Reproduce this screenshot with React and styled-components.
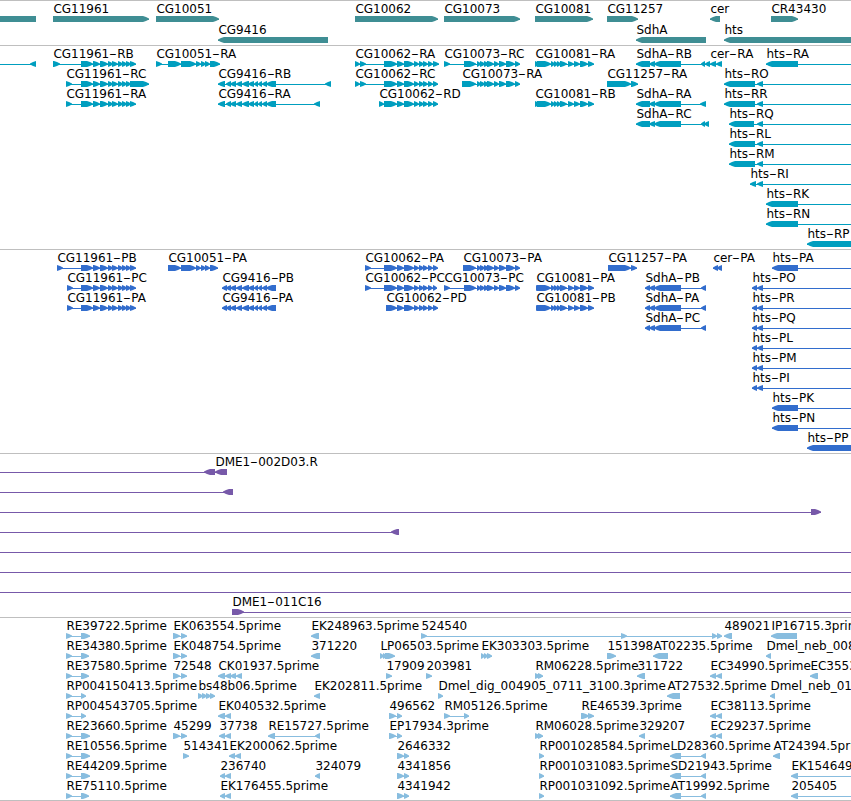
import React from "react";
import styled, { createGlobalStyle } from "styled-components";

const GlobalStyle = createGlobalStyle`
    body {
        margin: 0;
        background: #ffffff;
        overflow: hidden;
    }
`;

// Styled Components
const Browser = styled.main`
    display: flex;
    flex-direction: column;
    width: 851px;
    height: 801px;
    box-sizing: border-box;
    overflow: hidden;
    background: #ffffff;
    border-bottom: 1px solid #bfbfbf;
`;

const TrackPanel = styled.section`
    flex: none;
    box-sizing: border-box;
    height: ${(props) => props.$height}px;
    border-top: 1px solid #bfbfbf;
    color: ${(props) => props.$color};
`;

const Lane = styled.div`
    position: relative;
    height: ${(props) => props.$height}px;
`;

const FeatureBox = styled.div`
    position: absolute;
    top: 0;
`;

const Label = styled.span`
    display: block;
    height: 15px;
    margin-left: 0.4px;
    line-height: 17px;
    font-family: "DejaVu Sans", sans-serif;
    font-size: 12px;
    color: #000000;
    white-space: nowrap;
`;

// hyphen drawn as wide as a digit
const Dash = styled.span`
    display: inline-block;
    width: 8px;
    text-align: center;
    transform: scaleX(1.8);
`;

const Glyph = styled.svg`
    display: block;
    height: 6px;
    overflow: visible;
    fill: currentColor;
`;

const LEFT = -12;
const RIGHT = 863;

// strand is the arrow direction, from/to stretch the intron line past the exons
const f = (label, strand, exons, span = {}) => ({ label, strand, exons, ...span });
const toRight = { to: RIGHT };

const cg11961 = [[81, 93], [93, 100], [100, 108], [108, 113], [112, 118], [118, 123], [122, 127], [126, 131]];
const cg9416 = [[226, 231], [230, 236], [236, 242], [242, 249], [248, 254], [254, 258], [258, 262], [262, 267], [266, 276]];
const cg10062 = [[397, 404], [404, 414], [414, 419], [419, 424], [423, 428], [428, 433]];
const cg10073 = [[477, 481], [480, 485], [484, 489], [487, 494], [494, 499], [499, 506], [506, 515], [515, 520]];
const cg10081 = [[551, 555], [554, 558], [557, 561], [560, 567], [568, 574], [574, 580], [580, 588], [588, 594]];
const cg10051 = [[168, 181], [181, 196], [196, 201], [201, 206], [205, 210]];
const sdhR = [[636, 650], [649, 655], [654, 681]];
const sdhP = [[645, 650], [649, 655], [654, 681], [701, 706]];
const htsP = [[752, 757], [757, 763]];
const ek = [[173, 180], [181, 187]];
const ec = [[710, 716], [716, 722]];

const tracks = [
    {
        name: "genes",
        color: "#3f8e94",
        height: 45,
        laneHeight: 21,
        lanes: [
            [
                f("", "-", [[LEFT, 36]]),
                f("CG11961", "+", [[53, 149]]),
                f("CG10051", "+", [[156, 219]]),
                f("CG10062", "+", [[355, 438]]),
                f("CG10073", "+", [[444, 520]]),
                f("CG10081", "+", [[535, 593]]),
                f("CG11257", "+", [[607, 638]]),
                f("cer", "-", [[710, 720]]),
                f("CR43430", "+", [[771, 798]]),
            ],
            [
                f("CG9416", "-", [[218, 328]]),
                f("SdhA", "-", [[636, 706]]),
                f("hts", "-", [[724, RIGHT]]),
            ],
        ],
    },
    {
        name: "transcripts",
        color: "#009ebf",
        height: 204,
        laneHeight: 20,
        lanes: [
            [
                f("", "-", [[30, 36]], { from: LEFT }),
                f("CG11961-RB", "+", [[53, 60], ...cg11961, [130, 136]]),
                f("CG10051-RA", "+", [[156, 162], ...cg10051, [210, 220]]),
                f("CG10062-RA", "+", [[355, 360], [360, 366], [384, 397], ...cg10062, [433, 439]]),
                f("CG10073-RC", "+", [[444, 450], [464, 476], ...cg10073]),
                f("CG10081-RA", "+", [[535, 540], [537, 551], ...cg10081]),
                f("SdhA-RB", "-", [...sdhR, [701, 705], [705, 710]]),
                f("cer-RA", "-", [[710, 716], [716, 722]]),
                f("hts-RA", "-", [[766, 798]], toRight),
            ],
            [
                f("CG11961-RC", "+", [[66, 72], ...cg11961, [130, 149]]),
                f("CG9416-RB", "-", [[218, 225], ...cg9416, [325, 331]]),
                f("CG10062-RC", "+", [[355, 360], [360, 366], [384, 397], ...cg10062, [433, 438]]),
                f("CG10073-RA", "+", [[462, 476], ...cg10073]),
                f("CG11257-RA", "+", [[607, 631], [631, 638]]),
                f("hts-RO", "-", [[724, 755], [757, 763]], toRight),
            ],
            [
                f("CG11961-RA", "+", [[66, 72], ...cg11961, [130, 136]]),
                f("CG9416-RA", "-", [[218, 225], ...cg9416, [314, 320]]),
                f("CG10062-RD", "+", [[379, 384], [384, 397], ...cg10062, [433, 438]]),
                f("CG10081-RB", "+", [[535, 540], [537, 551], ...cg10081]),
                f("SdhA-RA", "-", [...sdhR, [700, 706]]),
                f("hts-RR", "-", [[724, 755], [757, 763]], toRight),
            ],
            [
                f("SdhA-RC", "-", [...sdhR, [701, 705], [704, 709]]),
                f("hts-RQ", "-", [[729, 754], [757, 763]], toRight),
            ],
            [f("hts-RL", "-", [[729, 755], [757, 763]], toRight)],
            [f("hts-RM", "-", [[729, 755], [757, 763]], toRight)],
            [f("hts-RI", "-", [[750, 756], [757, 763]], toRight)],
            [f("hts-RK", "-", [[766, 798]], toRight)],
            [f("hts-RN", "-", [[766, 798]], toRight)],
            [f("hts-RP", "-", [[807, RIGHT]])],
        ],
    },
    {
        name: "proteins",
        color: "#326dcd",
        height: 204,
        laneHeight: 20,
        lanes: [
            [
                f("CG11961-PB", "+", [[57, 63], ...cg11961, [130, 136]]),
                f("CG10051-PA", "+", [...cg10051, [210, 218]]),
                f("CG10062-PA", "+", [[365, 371], [384, 397], ...cg10062, [433, 438]]),
                f("CG10073-PA", "+", [[463, 476], ...cg10073]),
                f("CG11257-PA", "+", [[608, 631], [631, 637]]),
                f("cer-PA", "-", [[713, 718], [717, 722]]),
                f("hts-PA", "-", [[772, 798]], toRight),
            ],
            [
                f("CG11961-PC", "+", [[67, 73], ...cg11961, [130, 136]]),
                f("CG9416-PB", "-", [[222, 227], ...cg9416]),
                f("CG10062-PC", "+", [[365, 371], [384, 397], ...cg10062, [433, 437]]),
                f("CG10073-PC", "+", [[444, 450], [464, 476], ...cg10073]),
                f("CG10081-PA", "+", [[536, 540], [537, 551], ...cg10081]),
                f("SdhA-PB", "-", sdhP),
                f("hts-PO", "-", htsP, toRight),
            ],
            [
                f("CG11961-PA", "+", [[67, 73], ...cg11961, [130, 136]]),
                f("CG9416-PA", "-", [[222, 227], ...cg9416]),
                f("CG10062-PD", "+", [[386, 397], ...cg10062, [433, 438]]),
                f("CG10081-PB", "+", [[536, 540], [537, 551], ...cg10081]),
                f("SdhA-PA", "-", sdhP),
                f("hts-PR", "-", htsP, toRight),
            ],
            [f("SdhA-PC", "-", sdhP), f("hts-PQ", "-", htsP, toRight)],
            [f("hts-PL", "-", htsP, toRight)],
            [f("hts-PM", "-", htsP, toRight)],
            [f("hts-PI", "-", htsP, toRight)],
            [f("hts-PK", "-", [[772, 798]], toRight)],
            [f("hts-PN", "-", [[772, 798]], toRight)],
            [f("hts-PP", "-", [[807, RIGHT]])],
        ],
    },
    {
        name: "clones",
        color: "#7759a9",
        height: 164,
        laneHeight: 20,
        lanes: [
            [
                f("", "-", [[204, 215]], { from: LEFT }),
                f("DME1-002D03.R", "-", [[215, 227]]),
            ],
            [f("", "-", [[223, 233]], { from: LEFT })],
            [f("", "+", [[811, 821]], { from: LEFT })],
            [f("", "-", [[391, 399]], { from: LEFT })],
            [f("", "+", [], { from: LEFT, to: RIGHT })],
            [f("", "+", [], { from: LEFT, to: RIGHT })],
            [f("", "+", [], { from: LEFT, to: RIGHT })],
            [f("DME1-011C16", "+", [[232, 244]], toRight)],
        ],
    },
    {
        name: "ests",
        color: "#88bddf",
        height: 183,
        laneHeight: 20,
        lanes: [
            [
                f("RE39722.5prime", "+", [[66, 72], [81, 90]]),
                f("EK063554.5prime", "+", ek),
                f("EK248963.5prime", "-", [[311, 319]]),
                f("524540", "+", [[421, 427], [621, 627], [712, 717], [717, 722]]),
                f("489021", "-", [[724, 732]]),
                f("IP16715.3prime", "-", [[771, 797]]),
            ],
            [
                f("RE34380.5prime", "+", [[66, 72], [81, 89]]),
                f("EK048754.5prime", "+", ek),
                f("371220", "-", [[311, 320]]),
                f("LP06503.5prime", "+", [[380, 384], [383, 387], [385, 395]]),
                f("EK303303.5prime", "+", [[481, 485], [484, 488], [487, 492]]),
                f("151398", "+", [[607, 616]]),
                f("AT02235.5prime", "-", [[653, 668]]),
                f("Dmel_neb_008", "-", [[766, 771]]),
            ],
            [
                f("RE37580.5prime", "+", [[66, 72], [81, 89]]),
                f("72548", "+", ek),
                f("CK01937.5prime", "-", [[218, 225], [225, 231], [230, 236], [236, 242]]),
                f("17909", "+", [[386, 392]]),
                f("203981", "+", [[426, 432]]),
                f("RM06228.5prime", "+", [[535, 540], [538, 543]]),
                f("311722", "-", [[637, 645]]),
                f("EC34990.5prime", "-", ec),
                f("EC3553", "-", [[810, 818]]),
            ],
            [
                f("RP004150413.5prime", "+", [[66, 72], [81, 86]]),
                f("bs48b06.5prime", "+", [[198, 203], [202, 207], [206, 211], [210, 215]]),
                f("EK202811.5prime", "-", [[314, 320]]),
                f("Dmel_dig_004905_0711_3100.3prime", "+", [[438, 443]]),
                f("AT27532.5prime", "-", [[667, 680]]),
                f("Dmel_neb_01", "-", [[770, 775]]),
            ],
            [
                f("RP004543705.5prime", "+", [[66, 72], [81, 86]]),
                f("EK040532.5prime", "-", [[218, 225], [225, 231]]),
                f("496562", "+", [[389, 396], [397, 402]]),
                f("RM05126.5prime", "+", [[444, 450], [464, 469]]),
                f("RE46539.3prime", "+", [[581, 589], [588, 594]]),
                f("EC38113.5prime", "-", ec),
            ],
            [
                f("RE23660.5prime", "+", [[66, 72], [81, 90]]),
                f("45299", "+", ek),
                f("37738", "-", [[219, 225], [225, 231]]),
                f("RE15727.5prime", "-", [[268, 275], [315, 320]]),
                f("EP17934.3prime", "+", [[389, 396], [397, 402]]),
                f("RM06028.5prime", "+", [[535, 540], [538, 543]]),
                f("329207", "-", [[639, 645]]),
                f("EC29237.5prime", "-", ec),
            ],
            [
                f("RE10556.5prime", "+", [[66, 72], [81, 90]]),
                f("514341", "+", [[183, 189]]),
                f("EK200062.5prime", "-", [[229, 235], [235, 241]]),
                f("2646332", "+", [[397, 404], [404, 409]]),
                f("RP001028584.5prime", "+", [[539, 544]]),
                f("LD28360.5prime", "-", [[670, 681], [701, 706]]),
                f("AT24394.5prime", "-", [[773, 780]]),
            ],
            [
                f("RE44209.5prime", "+", [[66, 72], [81, 90]]),
                f("236740", "-", [[220, 225], [225, 231]]),
                f("324079", "-", [[315, 320]]),
                f("4341856", "+", [[397, 404], [404, 409]]),
                f("RP001031083.5prime", "+", [[539, 544]]),
                f("SD21943.5prime", "-", [[670, 681], [701, 706]]),
                f("EK154649", "-", [[791, 798]], toRight),
            ],
            [
                f("RE75110.5prime", "+", [[66, 72], [81, 89]]),
                f("EK176455.5prime", "-", [[220, 225], [225, 231]]),
                f("4341942", "+", [[397, 404], [404, 409]]),
                f("RP001031092.5prime", "+", [[539, 544]]),
                f("AT19992.5prime", "-", [[670, 681], [701, 706]]),
                f("205405", "-", [[791, 798]], toRight),
            ],
        ],
    },
];

const exonPath = (a, b, strand) => {
    const head = Math.min(6, b - a);
    const tail = strand === "+" ? a : b;
    const tip = strand === "+" ? b : a;
    const s = strand === "+" ? -1 : 1;
    const neck = tip + s * head;
    const mid = tip + s * head * 0.5;
    return `M${tail} 0H${neck}L${mid} 1L${tip} 2.6V3.6L${mid} 5L${neck} 6H${tail}Z`;
};

const Feature = ({ label, strand, exons, from, to }) => {
    const start = from ?? exons[0][0];
    const end = to ?? exons[exons.length - 1][1];
    const width = end - start;

    return (
        <FeatureBox style={{ left: start }}>
            <Label>
                {label.split("-").map((part, i) => (
                    <React.Fragment key={i}>
                        {i > 0 && <Dash>-</Dash>}
                        {part}
                    </React.Fragment>
                ))}
            </Label>
            <Glyph width={width} viewBox={`0 0 ${width} 6`}>
                <rect x="0" y="3" width={width} height="1" />
                {exons.map(([a, b], i) => (
                    <path key={i} d={exonPath(a - start, b - start, strand)} />
                ))}
            </Glyph>
        </FeatureBox>
    );
};

const App = () => {
    return (
        <>
            <GlobalStyle />
            <Browser>
                {tracks.map((track) => (
                    <TrackPanel key={track.name} $height={track.height} $color={track.color}>
                        {track.lanes.map((lane, index) => (
                            <Lane key={index} $height={track.laneHeight}>
                                {lane.map((feature, i) => (
                                    <Feature key={i} {...feature} />
                                ))}
                            </Lane>
                        ))}
                    </TrackPanel>
                ))}
            </Browser>
        </>
    );
};

export default App;
